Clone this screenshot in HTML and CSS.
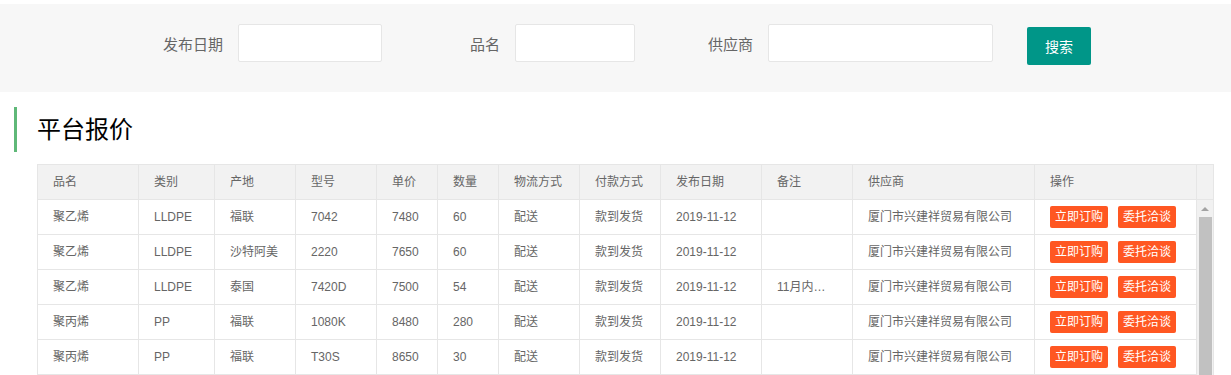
FILE: index.html
```html
<!DOCTYPE html>
<html lang="zh-CN">
<head>
    <meta charset="UTF-8">
    <meta name="viewport" content="width=device-width, initial-scale=1.0">
    <title>平台报价</title>
    <link rel="stylesheet" href="styles.css">
</head>
<body>
    <!-- 搜索栏 -->
    <div class="search-bar">
        <form class="search-form">
            <div class="field">
                <label for="pub-date">发布日期</label>
                <input type="text" id="pub-date" name="pub-date" class="input-date">
            </div>
            <div class="field">
                <label for="product">品名</label>
                <input type="text" id="product" name="product" class="input-product">
            </div>
            <div class="field">
                <label for="supplier">供应商</label>
                <input type="text" id="supplier" name="supplier" class="input-supplier">
            </div>
            <button type="submit" class="btn-search">搜索</button>
        </form>
    </div>

    <h2 class="section-title">平台报价</h2>

    <!-- 报价表格 -->
    <div class="table-box">
        <table class="table-head">
            <colgroup>
                <col width="101"><col width="76"><col width="81"><col width="81">
                <col width="61"><col width="61"><col width="81"><col width="81">
                <col width="101"><col width="91"><col width="182"><col width="162">
                <col width="16">
            </colgroup>
            <tr>
                <th>品名</th>
                <th>类别</th>
                <th>产地</th>
                <th>型号</th>
                <th>单价</th>
                <th>数量</th>
                <th>物流方式</th>
                <th>付款方式</th>
                <th>发布日期</th>
                <th>备注</th>
                <th>供应商</th>
                <th>操作</th>
                <th class="gutter"></th>
            </tr>
        </table>

        <div class="table-body">
            <table class="table-rows">
                <colgroup>
                    <col width="101"><col width="76"><col width="81"><col width="81">
                    <col width="61"><col width="61"><col width="81"><col width="81">
                    <col width="101"><col width="91"><col width="182"><col width="162">
                </colgroup>
                <tr>
                    <td>聚乙烯</td><td>LLDPE</td><td>福联</td><td>7042</td><td>7480</td><td>60</td>
                    <td>配送</td><td>款到发货</td><td>2019-11-12</td><td></td><td>厦门市兴建祥贸易有限公司</td>
                    <td class="ops-cell"><div class="ops"><button class="btn-op">立即订购</button><button class="btn-op">委托洽谈</button></div></td>
                </tr>
                <tr>
                    <td>聚乙烯</td><td>LLDPE</td><td>沙特阿美</td><td>2220</td><td>7650</td><td>60</td>
                    <td>配送</td><td>款到发货</td><td>2019-11-12</td><td></td><td>厦门市兴建祥贸易有限公司</td>
                    <td class="ops-cell"><div class="ops"><button class="btn-op">立即订购</button><button class="btn-op">委托洽谈</button></div></td>
                </tr>
                <tr>
                    <td>聚乙烯</td><td>LLDPE</td><td>泰国</td><td>7420D</td><td>7500</td><td>54</td>
                    <td>配送</td><td>款到发货</td><td>2019-11-12</td><td>11月内到货</td><td>厦门市兴建祥贸易有限公司</td>
                    <td class="ops-cell"><div class="ops"><button class="btn-op">立即订购</button><button class="btn-op">委托洽谈</button></div></td>
                </tr>
                <tr>
                    <td>聚丙烯</td><td>PP</td><td>福联</td><td>1080K</td><td>8480</td><td>280</td>
                    <td>配送</td><td>款到发货</td><td>2019-11-12</td><td></td><td>厦门市兴建祥贸易有限公司</td>
                    <td class="ops-cell"><div class="ops"><button class="btn-op">立即订购</button><button class="btn-op">委托洽谈</button></div></td>
                </tr>
                <tr>
                    <td>聚丙烯</td><td>PP</td><td>福联</td><td>T30S</td><td>8650</td><td>30</td>
                    <td>配送</td><td>款到发货</td><td>2019-11-12</td><td></td><td>厦门市兴建祥贸易有限公司</td>
                    <td class="ops-cell"><div class="ops"><button class="btn-op">立即订购</button><button class="btn-op">委托洽谈</button></div></td>
                </tr>
            </table>

            <!-- 滚动条 -->
            <div class="scrollbar">
                <span class="scroll-arrow"></span>
                <span class="scroll-thumb"></span>
            </div>
        </div>
    </div>
</body>
</html>
```

FILE: styles.css
```css
/* Reset */
* {
    margin: 0;
    padding: 0;
    box-sizing: border-box;
}

html, body {
    overflow: hidden;
}

body {
    font-family: "Liberation Sans", "Noto Sans CJK SC", sans-serif;
    background-color: #fff;
    color: #666;
}

/* Search bar */
.search-bar {
    margin-top: 4px;
    background-color: #f7f7f7;
    padding: 20px 0 30px 128px;
}

.search-form {
    display: flex;
    align-items: flex-start;
    gap: 23px;
    height: 38px;
}

.field {
    display: flex;
    align-items: center;
}

.field label {
    width: 110px;
    padding-right: 15px;
    text-align: right;
    font-size: 15px;
    color: #666;
}

.field input {
    height: 38px;
    border: 1px solid #e6e6e6;
    border-radius: 2px;
    background-color: #fff;
    padding: 0 10px;
    font-size: 14px;
}

.input-date {
    width: 144px;
}

.input-product {
    width: 120px;
}

.input-supplier {
    width: 225px;
}

.btn-search {
    margin: 3px 0 0 11px;
    width: 64px;
    height: 38px;
    border: none;
    border-radius: 2px;
    background-color: #009688;
    color: #fff;
    font-family: inherit;
    font-size: 14px;
    cursor: pointer;
}

/* Title */
.section-title {
    margin: 15px 0 12px 14px;
    height: 45px;
    line-height: 45px;
    border-left: 3px solid #5fb878;
    padding-left: 20px;
    font-size: 24px;
    font-weight: normal;
    color: #000;
}

/* Table */
.table-box {
    margin-left: 37px;
    width: 1177px;
    border: 1px solid #e6e6e6;
    border-bottom: none;
}

table {
    border-collapse: separate;
    border-spacing: 0;
    table-layout: fixed;
}

.table-head {
    width: 1175px;
    background-color: #f2f2f2;
}

.table-rows {
    width: 1159px;
    background-color: #fff;
}

th, td {
    padding: 7px 15px;
    line-height: 20px;
    font-size: 12px;
    font-weight: normal;
    color: #666;
    text-align: left;
    border-right: 1px solid #e6e6e6;
    border-bottom: 1px solid #e6e6e6;
    white-space: nowrap;
    overflow: hidden;
    text-overflow: ellipsis;
}

th.gutter {
    padding: 0;
    border-right: none;
}

td.ops-cell {
    padding: 6px 15px;
}

.ops {
    display: flex;
    gap: 10px;
}

.btn-op {
    height: 22px;
    line-height: 22px;
    padding: 0 5px;
    border: none;
    border-radius: 2px;
    background-color: #ff5722;
    color: #fff;
    font-family: inherit;
    font-size: 12px;
    cursor: pointer;
}

.table-body {
    display: flex;
}

/* Scrollbar */
.scrollbar {
    width: 16px;
    background-color: #f1f1f1;
    display: flex;
    flex-direction: column;
    align-items: flex-start;
}

.scroll-arrow {
    align-self: center;
    margin: 7px 0 6px;
    width: 0;
    height: 0;
    border-left: 4px solid transparent;
    border-right: 4px solid transparent;
    border-bottom: 4px solid #a3a3a3;
}

.scroll-thumb {
    flex: 1;
    width: 13px;
    margin-left: 2px;
    background-color: #c1c1c1;
}
```
